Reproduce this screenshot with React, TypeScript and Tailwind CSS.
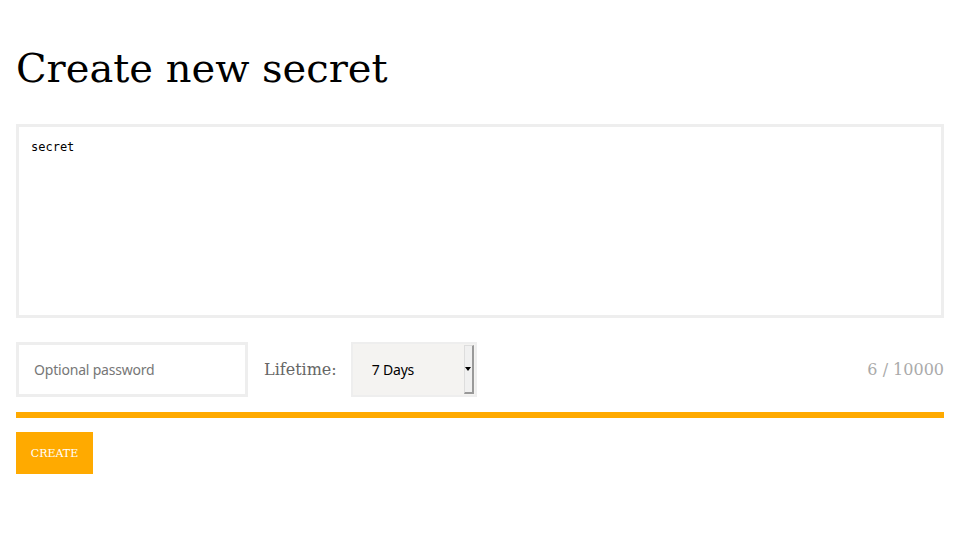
import React from "react";

const serif = "font-['DejaVu_Serif',serif]";

export default function App() {
  return (
    <div className="min-h-screen bg-white px-4 pt-[36px]">
      <h1 className={`${serif} text-[40px] leading-[64px] text-black`}>Create new secret</h1>

      <div className="mt-[24px] h-[194px] border-[3px] border-[#eeeeee] px-3 py-3">
        <div className="font-['DejaVu_Sans_Mono',monospace] text-[12px] leading-[16px] text-black">secret</div>
      </div>

      <div className="mt-[24px] flex items-center">
        <div className="flex h-[55px] w-[232px] items-center border-[3px] border-[#eeeeee] px-[15px]">
          <span className="font-['Noto_Sans',sans-serif] text-[14px] tracking-[-0.2px] text-[#777777]">Optional password</span>
        </div>
        <span className={`${serif} ml-4 text-[16px] text-[#666666]`}>Lifetime:</span>
        <div className="ml-[14px] flex h-[55px] w-[126px] items-center border-2 border-[#eeeeee] bg-[#f4f3f1] pl-[19px]">
          <span className="font-['Noto_Sans',sans-serif] text-[14px] tracking-[-0.2px] text-black">7 Days</span>
          <div className="ml-auto mr-[1px] flex h-[49px] w-[10px] items-center justify-center border-b-2 border-r-2 border-l border-t border-b-[#999999] border-r-[#999999] border-l-[#dddddd] border-t-[#dddddd] bg-[#f0f0f0]">
            <svg width="6" height="4" viewBox="0 0 6 4">
              <path d="M0 0 L6 0 L3 4 Z" fill="#000" />
            </svg>
          </div>
        </div>
        <span className={`${serif} ml-auto text-[16px] text-[#aaaaaa]`}>6 / 10000</span>
      </div>

      <div className="mt-[15px] h-[6px] bg-[#ffaa00]" />

      <button className={`${serif} mt-[14px] flex h-[42px] w-[77px] items-center justify-center bg-[#ffaa00] pt-[2px] text-[11px] text-white`}>
        CREATE
      </button>
    </div>
  );
}
